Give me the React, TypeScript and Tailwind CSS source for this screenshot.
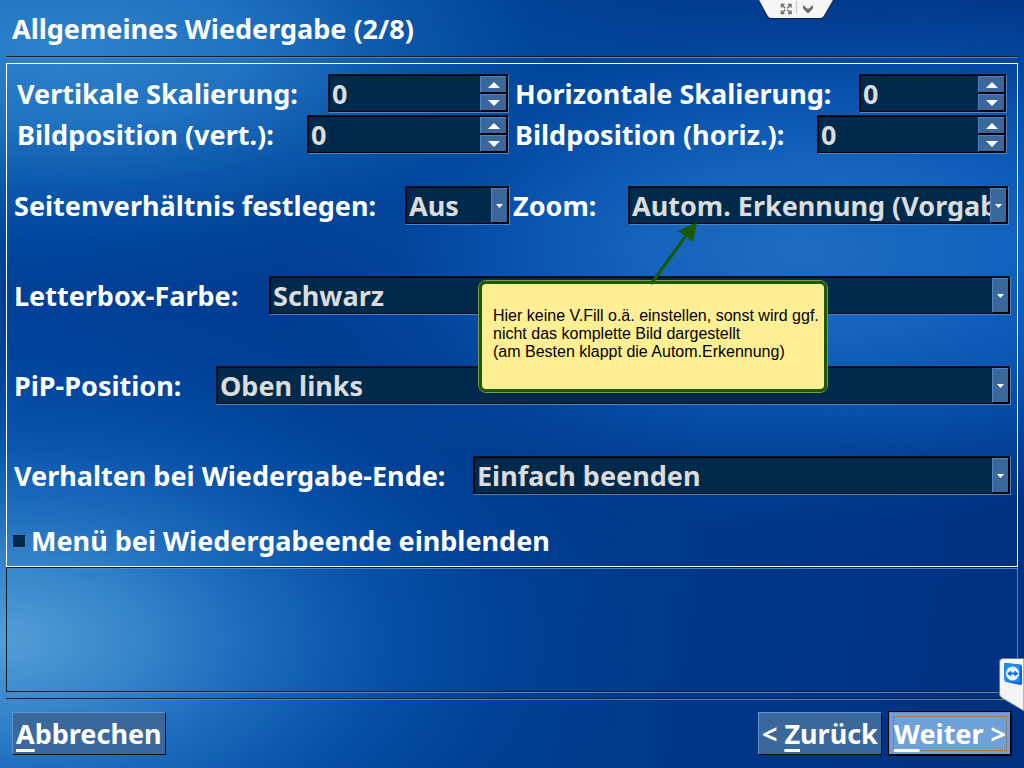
import { useState } from "react"
import type { ReactNode } from "react"
import clsx from "clsx"

const sunken =
  "border border-t-[#0c1626] border-l-[#0c1626] border-r-[#4f83c4] border-b-[#4f83c4]"
const raised =
  "border border-t-[#4f83c4] border-l-[#4f83c4] border-r-black border-b-black bg-[#3a689c]"

function Triangle({ up, small }: { up?: boolean; small?: boolean }) {
  if (small) {
    return (
      <svg width="7" height="4" viewBox="0 0 7 4" className="fill-white">
        <path d="M0 0h7L3.5 4z" />
      </svg>
    )
  }
  return (
    <svg width="12" height="6" viewBox="0 0 12 6" className="fill-white">
      <path d={up ? "M0 6h12L6 0z" : "M0 0h12L6 6z"} />
    </svg>
  )
}

function SpinField({ id, label, labelClass }: { id: string; label: string; labelClass: string }) {
  const [value, setValue] = useState(0)

  return (
    <div className="flex items-center">
      <label htmlFor={id} className={clsx("shrink-0 whitespace-nowrap", labelClass)}>
        {label}
      </label>
      <div className={clsx("flex h-[39px] min-w-0 flex-1", sunken)}>
        <div className="flex min-w-0 flex-1 border border-black bg-[#002a4c]">
          <input
            id={id}
            type="text"
            inputMode="numeric"
            value={value}
            onChange={(e) => setValue(Number(e.target.value) || 0)}
            className="min-w-0 flex-1 bg-transparent pl-[2px] text-[#dcdcdc] outline-none"
          />
          <div className="flex w-[27px] flex-col gap-px bg-black">
            <button
              type="button"
              aria-label={`${label} +`}
              onClick={() => setValue(value + 1)}
              className={clsx("flex flex-1 items-center justify-center", raised)}
            >
              <Triangle up />
            </button>
            <button
              type="button"
              aria-label={`${label} -`}
              onClick={() => setValue(value - 1)}
              className={clsx("flex flex-1 items-center justify-center", raised)}
            >
              <Triangle />
            </button>
          </div>
        </div>
      </div>
    </div>
  )
}

function SelectField({
  id,
  label,
  labelClass,
  options,
}: {
  id: string
  label: string
  labelClass: string
  options: string[]
}) {
  return (
    <div className="flex items-center">
      <label htmlFor={id} className={clsx("shrink-0 whitespace-nowrap", labelClass)}>
        {label}
      </label>
      <div className={clsx("h-[39px] min-w-0 flex-1", sunken)}>
        <div className="relative h-full border border-black bg-[#002a4c]">
          <select
            id={id}
            className="h-full w-full appearance-none bg-transparent pr-4 pb-[2px] pl-[2px] text-[#dcdcdc] outline-none"
          >
            {options.map((o) => (
              <option key={o}>{o}</option>
            ))}
          </select>
          <div
            className={clsx(
              "pointer-events-none absolute inset-y-0 right-0 flex w-[17px] items-center justify-center",
              raised
            )}
          >
            <Triangle small />
          </div>
        </div>
      </div>
    </div>
  )
}

function WizardButton({ children, active }: { children: ReactNode; active?: boolean }) {
  return (
    <button type="button" className={clsx("border", active ? "border-black" : "border-transparent")}>
      <span
        className={clsx(
          "block border border-t-[#5f93d4] border-r-black border-b-black border-l-[#5f93d4]",
          active ? "bg-[#70a0d8] p-[3px]" : "bg-[#3a689c] px-[3px] py-1"
        )}
      >
        <span
          className={clsx(
            "block leading-[33px]",
            active ? "h-[35px] border border-dotted border-[#8f6a3c]" : "h-[33px]"
          )}
        >
          {children}
        </span>
      </span>
    </button>
  )
}

function AccessKey({ children }: { children: string }) {
  return <span className="underline decoration-[3px] underline-offset-[5px]">{children}</span>
}

function Rule() {
  return <div className="mx-[6px] h-[2px] border-t border-b border-t-[#14202f] border-b-[#4f83c4]" />
}

function TopTab() {
  return (
    <svg width="76" height="20" viewBox="0 0 76 20" className="absolute top-0 right-[190px]">
      <path d="M0 0h76L67 16q-1.500 3-4.500 3H13q-3 0-4.500-3z" fill="#0b2448" />
      <path d="M1 0h74L66 15.500q-1.200 2.500-4 2.500H13.500q-2.800 0-4-2.500z" fill="#f6f6f6" />
      <g stroke="#6a6a6a" strokeWidth="1.500" fill="none">
        <path d="M23.500 7.500V4.500H26.500M30 4.500h3v3M33 10.500v3h-3M26.500 13.500h-3v-3" />
        <path d="M24 5l3.200 3.200M32.500 5l-3.200 3.200M24 13l3.200-3.200M32.500 13l-3.200-3.200" />
      </g>
      <path d="M38.500 1v12" stroke="#c4c4c4" />
      <path d="M45 5v3.500l5 5 5-5V5l-5 4z" fill="#6a6a6a" />
    </svg>
  )
}

function SideTab() {
  return (
    <svg width="25" height="54" viewBox="0 0 25 54" className="absolute right-0 bottom-[56px]">
      <path d="M25 .500H4Q.500.500.500 4v32q0 2.500 2.500 4l22 13z" fill="#f4f4f4" stroke="#77797c" />
      <path d="M5 6q0-1 1-1l15 1.500q2 .500 2 2.500v17q0 1-1.500 1L7.500 24q-2-.500-2-2z" fill="#0b5fd8" />
      <path d="M5 6q0-1 1-1l14 1.500q1 0 1 1.500v16.500L7 23.500q-1.500 0-1.500-2z" fill="#1b8df2" />
      <ellipse cx="13.500" cy="15.500" rx="6.500" ry="7" fill="#eef4fb" />
      <path d="M8 15.500l4-3v2h3.500v-2l4 3-4 3v-2H12v2z" fill="#0c6fe0" />
    </svg>
  )
}

function Hint() {
  return (
    <div className="absolute top-[280px] left-[478px] h-[113px] w-[350px] rounded-lg border border-[#7f9c4c] text-[16px] leading-[18px] font-normal text-black">
      <div className="h-full rounded-[7px] border-[3px] border-[#175a00] bg-[#ffef94] pt-[23px] pl-[11px] font-[Liberation_Sans,Arial,sans-serif] whitespace-nowrap">
        Hier keine V.Fill o.ä. einstellen, sonst wird ggf.
        <br />
        nicht das komplette Bild dargestellt
        <br />
        (am Besten klappt die Autom.Erkennung)
      </div>
      <svg width="50" height="66" viewBox="0 0 50 66" className="absolute -top-[62px] left-[170px]">
        <path d="M2 65L36 18" stroke="#175a00" strokeWidth="3" />
        <path d="M48 3L29 12l15 11z" fill="#175a00" />
      </svg>
    </div>
  )
}

export default function App() {
  return (
    <div className="relative flex min-h-screen flex-col overflow-hidden bg-[#003585] bg-[radial-gradient(ellipse_640px_350px_at_0px_640px,#549ed8_0%,#3c8ccfee_20%,#1f70c2dd_40%,#0a58b0bb_60%,#004aa266_80%,#003c9200_100%),radial-gradient(ellipse_620px_250px_at_60px_50px,#2f82cc_0%,#2376c4ee_30%,#0f60b4bb_55%,#004ea466_78%,#003c9200_100%),radial-gradient(ellipse_520px_280px_at_800px_250px,#1d6dc0_0%,#1666c0ee_30%,#0c5cbabb_55%,#064eaa66_78%,#003c9200_100%),radial-gradient(ellipse_300px_260px_at_1024px_240px,#1060c0_0%,#0a58b888_50%,#003c9200_100%),linear-gradient(100deg,#00409a_0%,#003c90_35%,#003a8c_60%,#003080_100%)] font-['Noto_Sans',sans-serif] text-[27px] leading-[36px] font-bold text-white">
      <h1 className="px-3 pt-[11px] pb-[9px]">Allgemeines Wiedergabe (2/8)</h1>
      <Rule />

      <form className="mx-[6px] mt-[5px] border border-white pt-[10px] pb-[7px]">
        <div className="grid grid-cols-2 gap-x-[6px] gap-y-[2px] px-[10px]">
          <SpinField id="vscale" label="Vertikale Skalierung:" labelClass="w-[311px]" />
          <SpinField id="hscale" label="Horizontale Skalierung:" labelClass="w-[344px]" />
          <SpinField id="vpos" label="Bildposition (vert.):" labelClass="w-[290px]" />
          <SpinField id="hpos" label="Bildposition (horiz.):" labelClass="w-[302px]" />
        </div>

        <div className="mt-8 grid grid-cols-2 gap-x-[3px] pr-2 pl-[7px]">
          <SelectField
            id="aspect"
            label="Seitenverhältnis festlegen:"
            labelClass="w-[391px]"
            options={["Aus", "4:3", "16:9"]}
          />
          <SelectField
            id="zoom"
            label="Zoom:"
            labelClass="w-[115px]"
            options={["Autom. Erkennung (Vorgabe)", "V.Fill"]}
          />
        </div>

        <div className="mt-[51px] flex flex-col gap-[51px] pr-[6px] pl-[7px]">
          <SelectField id="letterbox" label="Letterbox-Farbe:" labelClass="w-[255px]" options={["Schwarz"]} />
          <SelectField id="pip" label="PiP-Position:" labelClass="w-[202px]" options={["Oben links"]} />
          <SelectField
            id="ende"
            label="Verhalten bei Wiedergabe-Ende:"
            labelClass="w-[459px]"
            options={["Einfach beenden"]}
          />
        </div>

        <div className="mt-7 flex items-center pl-[6px]">
          <input
            id="menu"
            type="checkbox"
            className={clsx("mr-[5px] size-[13px] appearance-none bg-[#002a4c] checked:bg-white", sunken)}
          />
          <label htmlFor="menu">Menü bei Wiedergabeende einblenden</label>
        </div>
      </form>

      <div className="mx-[6px] flex-1 border border-[#14202f] border-r-[#4f83c4] shadow-[inset_0_1px_0_#4f83c4,0_1px_0_#4f83c4]" />

      <div className="mt-[6px]">
        <Rule />
      </div>
      <div className="flex items-center justify-between pt-[11px] pr-3 pb-3 pl-[11px]">
        <WizardButton>
          <AccessKey>A</AccessKey>bbrechen
        </WizardButton>
        <div className="flex gap-[5px]">
          <WizardButton>
            &lt; <AccessKey>Z</AccessKey>urück
          </WizardButton>
          <WizardButton active>
            <AccessKey>W</AccessKey>eiter &gt;
          </WizardButton>
        </div>
      </div>

      <TopTab />
      <Hint />
      <SideTab />
    </div>
  )
}
